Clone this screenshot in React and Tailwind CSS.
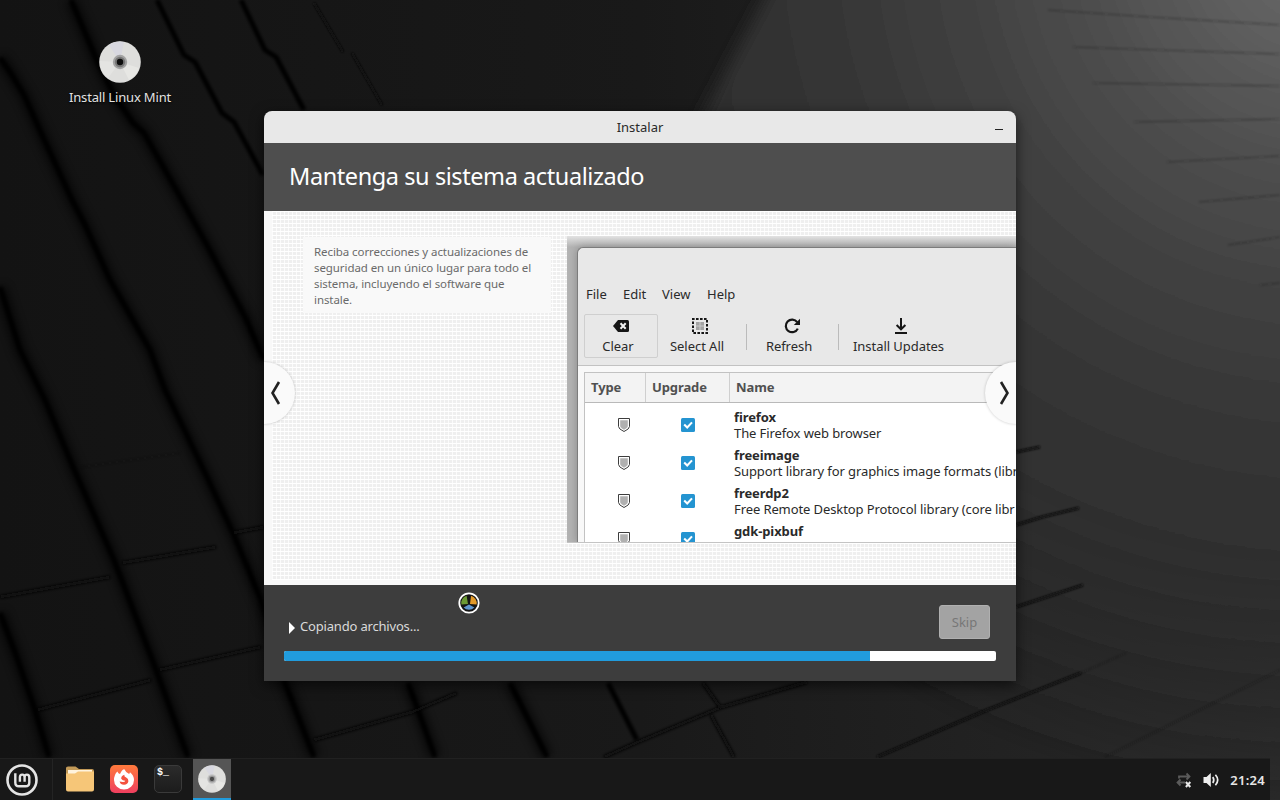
/* ── Data ─────────────────────────────────────────────────── */
const updates = [
  { name: "firefox", text: "The Firefox web browser" },
  { name: "freeimage", text: "Support library for graphics image formats (libr" },
  { name: "freerdp2", text: "Free Remote Desktop Protocol library (core libr" },
  { name: "gdk-pixbuf" },
];

const progress = 82.3;

/* ── Wallpaper ────────────────────────────────────────────── */
const grooves = [
  "M0 613L16 655L35 710L49 757",
  "M0 287L20 350L45 400L73 467L114 560L155 667L188 757",
  "M0 58L10 72L24 95L42 135L72 200L85 225L110 280L150 350L165 390L182 425L206 475L233 533L261 600L285 683L314 757",
  "M71 0L98 63L114 95L133 123L144 133L178 193L208 247L245 317L264 360",
  "M408 683L418 710L435 757",
  "M510 683L547 757",
];

const thinGrooves = [
  "M157 0L184 55L195 62L222 113L234 122L263 175",
  "M241 0L265 50L276 57L304 110",
  "M608 683L637 740",
];

const seams = [
  "M0 597L110 577",
  "M122 563L216 547",
  "M233 533L264 527",
  "M37 710L151 680",
  "M159 670L261 647",
  "M314 740L412 712L457 693",
  "M604 757L640 741L722 707L807 682",
  "M703 683L720 707M711 715L734 757",
];

const thinSeams = [
  "M314 3L343 52M352 53L382 105",
  "M877 757L987 710L1081 673",
  "M1016 607L1083 585",
  "M1016 525L1042 517L1079 508",
  "M1016 452L1040 447",
];

const faintLines = [
  "M1048 10L1150 17L1280 25",
  "M1073 47L1160 50L1280 54",
  "M1093 83L1280 86",
  "M1134 122L1280 119",
  "M1167 162L1280 156",
  "M1199 202L1280 195",
  "M1228 245L1280 237",
  "M1260 285L1280 283",
  "M1081 673L1126 653",
  "M1105 757L1280 670",
  "M82 467L180 453",
];

function Wallpaper() {
  return (
    <svg className="absolute inset-0" width="1280" height="800" viewBox="0 0 1280 800">
      <defs>
        <linearGradient id="base" x1="0" y1="0" x2="1280" y2="0" gradientUnits="userSpaceOnUse">
          <stop offset="0" stopColor="#131313" />
          <stop offset="0.5" stopColor="#191919" />
          <stop offset="1" stopColor="#292929" />
        </linearGradient>
        <radialGradient id="glow" cx="1320" cy="-60" r="860" gradientUnits="userSpaceOnUse">
          <stop offset="0" stopColor="#6c6c6c" />
          <stop offset="0.12" stopColor="#5f5f5f" />
          <stop offset="0.25" stopColor="#505050" />
          <stop offset="0.4" stopColor="#424242" />
          <stop offset="0.55" stopColor="#373737" />
          <stop offset="0.72" stopColor="#2f2f2f" />
          <stop offset="0.85" stopColor="#2b2b2b" stopOpacity="0.6" />
          <stop offset="1" stopColor="#272727" stopOpacity="0" />
        </radialGradient>
        <filter id="soft" x="-20%" y="-20%" width="140%" height="140%">
          <feGaussianBlur stdDeviation="8" />
        </filter>
        <filter id="shade" x="-50" y="-50" width="1380" height="900" filterUnits="userSpaceOnUse">
          <feGaussianBlur stdDeviation="4" />
        </filter>
        <filter id="edge" x="-50" y="-50" width="1380" height="900" filterUnits="userSpaceOnUse">
          <feGaussianBlur stdDeviation="1.6" />
        </filter>
        <filter id="fine" x="-50" y="-50" width="1380" height="900" filterUnits="userSpaceOnUse">
          <feGaussianBlur stdDeviation="0.8" />
        </filter>
      </defs>
      <rect width="1280" height="800" fill="url(#base)" />
      <path d="M785 -40L625 260V800H1320V-40Z" fill="url(#glow)" filter="url(#soft)" />
      <g fill="none" strokeLinejoin="round">
        <g stroke="#060606" strokeWidth="12" opacity="0.65" filter="url(#shade)">
          {grooves.map((d) => <path key={d} d={d} />)}
        </g>
        <g stroke="#050505" strokeWidth="5" filter="url(#edge)">
          {grooves.map((d) => <path key={d} d={d} />)}
        </g>
        <g stroke="#050505" strokeWidth="5" filter="url(#edge)">
          {thinGrooves.map((d) => <path key={d} d={d} />)}
        </g>
        <g stroke="#070707" strokeWidth="3.5" filter="url(#edge)">
          {seams.map((d) => <path key={d} d={d} />)}
        </g>
        <g stroke="#0b0b0b" strokeWidth="2.5" filter="url(#fine)">
          {thinSeams.map((d) => <path key={d} d={d} />)}
        </g>
        <g stroke="#111" strokeWidth="1.2" opacity="0.35" filter="url(#fine)">
          {faintLines.map((d) => <path key={d} d={d} />)}
        </g>
      </g>
    </svg>
  );
}

/* ── Icons ────────────────────────────────────────────────── */
function DiscIcon({ size, hub, ring, hole }) {
  return (
    <svg width={size} height={size} viewBox="0 0 42 42">
      <circle cx="21" cy="21" r="20.8" fill="#dededc" />
      <path d="M21 21L10 4A20 20 0 0 1 25 1Z" fill="#d8d8e0" />
      <path d="M21 21L40 27A20 20 0 0 1 30 39Z" fill="#e7e7e4" />
      <path d="M21 21L1 20A20 20 0 0 0 9 37Z" fill="#e4e4e2" />
      <circle cx="21" cy="21" r="7.2" fill={hub} />
      <circle cx="21" cy="21" r="5.2" fill={ring} />
      <circle cx="21" cy="21" r="3.2" fill={hole} />
    </svg>
  );
}

function MintIcon() {
  return (
    <svg width="32" height="32" viewBox="0 0 32 32" fill="none" stroke="#e4e4e4">
      <circle cx="16" cy="16" r="14.5" strokeWidth="2.6" />
      <path
        d="M9.3 9.3V18.5Q9.3 22.3 13 22.3H19.5Q23.3 22.3 23.3 18.5V13.4Q23.3 10.6 20.9 10.6Q18.6 10.6 18.6 13.2V17.8M18.6 13.2Q18.6 10.6 16.2 10.6Q13.9 10.6 13.9 13.2V17.8"
        strokeWidth="2.4"
      />
    </svg>
  );
}

function FolderIcon() {
  return (
    <svg width="28" height="26" viewBox="0 0 28 26">
      <path d="M0 2Q0 0.5 2 0.5H9.5L13 3H26Q28 3 28 5V12H0Z" fill="#c39a58" />
      <rect x="2" y="4" width="24" height="8" fill="#fff3dc" />
      <path d="M0 7.5H9L12 5.5H28V23.5Q28 25.5 26 25.5H2Q0 25.5 0 23.5Z" fill="#f6c678" />
    </svg>
  );
}

function FirefoxIcon() {
  return (
    <svg width="28" height="28" viewBox="0 0 28 28">
      <defs>
        <linearGradient id="fox" x1="0" y1="0" x2="0" y2="1">
          <stop offset="0" stopColor="#ff7a3c" />
          <stop offset="1" stopColor="#ef3f5f" />
        </linearGradient>
      </defs>
      <rect width="28" height="28" rx="5" fill="url(#fox)" />
      <path d="M7.3 6.5Q8.3 8.5 10 9Q12 4.5 14.4 4.3Q15.5 7.3 19.2 9L20 7.2Q24 10.5 24 15A10 9.5 0 0 1 4 15Q4 10 7.3 6.5Z" fill="#fff" />
      <path d="M14.3 9.8Q14 11.8 16.2 12.4Q18.6 13.3 18.4 16.2A4.5 4.3 0 0 1 9.6 16.5L13 17Q15 17 15.3 15.8Q12.5 15.9 11.2 13.7Q11 11 14.3 9.8Z" fill="#f4523f" />
    </svg>
  );
}

function NetworkIcon() {
  return (
    <svg width="18" height="16" viewBox="0 0 18 16" fill="none">
      <path d="M3 6.5V4.5H13M10.5 1.5L13.5 4.5L10.5 7.5" stroke="#5b5b5b" strokeWidth="1.8" />
      <path d="M9 10.5H1.5M4.5 7.5L1.5 10.5L4.5 13.5" stroke="#5b5b5b" strokeWidth="1.8" />
      <path d="M9.9 10L14.3 15M14.3 10L9.9 15" stroke="#e8e8e8" strokeWidth="2" />
    </svg>
  );
}

function VolumeIcon() {
  return (
    <svg width="17" height="16" viewBox="0 0 17 16" fill="none" stroke="#eee" strokeWidth="1.7">
      <path d="M0.5 5H3.5L7.8 1V15L3.5 11H0.5Z" fill="#eee" stroke="none" />
      <path d="M9.8 5Q11.8 8 9.8 11" />
      <path d="M12.4 2.8Q17 8 12.4 13.2" />
    </svg>
  );
}

function ClearIcon() {
  return (
    <svg width="16" height="12" viewBox="0 0 16 12">
      <path d="M5 0H14.5Q16 0 16 1.5V10.5Q16 12 14.5 12H5L0 6Z" fill="#161616" />
      <path d="M7.5 3.3L12.7 8.7M12.7 3.3L7.5 8.7" stroke="#f2f2f2" strokeWidth="2" />
    </svg>
  );
}

function SelectIcon() {
  return (
    <svg width="16" height="16" viewBox="0 0 16 16" fill="none">
      <rect x="1" y="1" width="14" height="14" stroke="#161616" strokeWidth="2" strokeDasharray="2.6 1.4" strokeDashoffset="1" />
      <rect x="4" y="4" width="8" height="8" fill="#a3a3a3" />
      <path d="M4 8H12M8 4V12" stroke="#c9c9c9" strokeWidth="1" />
    </svg>
  );
}

function RefreshIcon() {
  return (
    <svg width="17" height="16" viewBox="0 0 17 16" fill="none">
      <path d="M13.8 10.6A6.3 6.3 0 1 1 13.2 4.2" stroke="#161616" strokeWidth="2.2" />
      <path d="M16 0.8V7H9.8Z" fill="#161616" />
    </svg>
  );
}

function InstallIcon() {
  return (
    <svg width="14" height="16" viewBox="0 0 14 16" fill="none" stroke="#161616" strokeWidth="2">
      <path d="M7 0V11M2.6 7L7 11.3L11.4 7M1 15H13" />
    </svg>
  );
}

function ShieldIcon() {
  return (
    <svg width="12" height="14" viewBox="0 0 12 14">
      <path d="M0.5 0.5H11.5V8.5Q11.5 11 6 13.5Q0.5 11 0.5 8.5Z" fill="#fff" stroke="#3d3d3d" />
      <path d="M2.2 2.2H9.8V8Q9.8 9.8 6 11.7Q2.2 9.8 2.2 8Z" fill="#b0b0b0" />
    </svg>
  );
}

function CheckIcon() {
  return (
    <svg width="14" height="14" viewBox="0 0 14 14">
      <rect width="14" height="14" rx="1.5" fill="#2494d1" />
      <path d="M3.2 6.6L6.2 9.5L11 4.4" fill="none" stroke="#fff" strokeWidth="2.1" />
    </svg>
  );
}

function BusyCursor() {
  return (
    <svg className="absolute left-[194px] top-[7px]" width="22" height="22" viewBox="0 0 22 22">
      <circle cx="11" cy="11" r="9.7" fill="#151515" stroke="#fff" strokeWidth="1.8" />
      <path d="M10 12L3.4 12.4A7.7 7.7 0 0 1 8.6 3.7Z" fill="#6c9a35" />
      <path d="M12 12L13 3.7A7.7 7.7 0 0 1 18.6 12.4Z" fill="#e29a2a" />
      <path d="M11 12.5L16.4 15.6A7.7 7.7 0 0 1 5.6 15.6Z" fill="#5f96cf" />
    </svg>
  );
}

/* ── Update manager preview inside the slide ──────────────── */
function ToolItem({ icon, label, className }) {
  return (
    <div className={`flex flex-col h-11 shrink-0 ${className}`}>
      <div className="flex h-6 items-center justify-center">{icon}</div>
      <span className="text-center whitespace-nowrap leading-4">{label}</span>
    </div>
  );
}

function UpdateManager() {
  return (
    <div className="w-[449px] h-[307px] mt-[25px] ml-4 pl-[10px] pt-[11px] shrink-0 overflow-hidden bg-[linear-gradient(to_bottom,#e2e2e2,#b4b4b4_11px,#b4b4b4)] border-b border-[#c4c4c4]">
      <div className="w-[439px] h-[296px] flex flex-col overflow-hidden rounded-tl-md border-t border-l border-[#7c7c7c] bg-[#e8e8e8] text-[13px] text-[#2a2a2a] shadow-[0_0_10px_rgba(0,0,0,0.25)]">
        <div className="flex pt-[38px] pl-2 leading-4">
          <span className="w-[37px]">File</span>
          <span className="w-[39px]">Edit</span>
          <span className="w-[45px]">View</span>
          <span>Help</span>
        </div>
        <div className="flex pt-[12px] pl-[6px] tracking-[-0.05px]">
          <ToolItem
            icon={<div className="pl-[6px]"><ClearIcon /></div>}
            label="Clear"
            className="w-[74px] outline outline-[#cfcfcf] -outline-offset-1 pr-[6px] rounded-xs"
          />
          <ToolItem icon={<div className="pl-[6px]"><SelectIcon /></div>} label="Select All" className="w-[78px]" />
          <div className="w-px h-[26px] mt-[10px] ml-[10px] bg-[#bbb]" />
          <ToolItem icon={<div className="pl-[6px]"><RefreshIcon /></div>} label="Refresh" className="w-[84px]" />
          <div className="w-px h-[26px] mt-[10px] ml-[7px] bg-[#bbb]" />
          <ToolItem icon={<div className="pl-1"><InstallIcon /></div>} label="Install Updates" className="w-[119px]" />
        </div>
        <div className="flex-1 mt-[7px] pt-[6px] pl-[6px] bg-[#f8f8f8] border-t border-[#c2c2c2]">
          <div className="h-full bg-white border-t border-l border-[#c2c2c2]">
            <div className="flex h-[30px] items-center bg-[#f3f3f3] border-b border-[#b9b9b9] font-bold tracking-[-0.1px] text-[#505050]">
              <span className="w-[61px] h-full pl-[6px] leading-[29px] border-r border-[#cfcfcf]">Type</span>
              <span className="w-[84px] h-full pl-[6px] leading-[29px] border-r border-[#cfcfcf]">Upgrade</span>
              <span className="pl-[6px]">Name</span>
            </div>
            <div className="pt-[3px]">
              {updates.map((u) => (
                <div key={u.name} className="flex h-[38px] items-start pt-[3px]">
                  <div className="w-[78px] shrink-0 pl-[33px] pt-[9px]"><ShieldIcon /></div>
                  <div className="w-[71px] shrink-0 pl-[18px] pt-[9px]"><CheckIcon /></div>
                  <div className="leading-4 whitespace-nowrap tracking-[-0.1px]">
                    <div className="font-bold">{u.name}</div>
                    {u.text && <div>{u.text}</div>}
                  </div>
                </div>
              ))}
            </div>
          </div>
        </div>
      </div>
    </div>
  );
}

/* ── Installer window ─────────────────────────────────────── */
function Installer() {
  return (
    <div className="absolute left-[264px] top-[111px] w-[752px] h-[570px] flex flex-col rounded-t-lg overflow-hidden shadow-[0_4px_14px_rgba(0,0,0,0.6)]">
      <div className="relative h-8 shrink-0 flex items-center justify-center pt-[2px] bg-[#e8e8e8] text-[13px] text-[#2a2a2a]">
        Instalar
        <div className="absolute right-[13px] top-[18px] w-2 h-px bg-[#222]" />
      </div>
      <div className="h-[68px] shrink-0 flex items-center pl-[25px] bg-[#4e4e4e] text-[23.5px] tracking-[-0.42px] text-white">
        Mantenga su sistema actualizado
      </div>

      <div className="relative h-[374px] shrink-0 bg-[#f8f8f8]">
        <div className="h-[369px] ml-2 pl-[31px] flex items-start overflow-hidden bg-[#efefef] bg-[linear-gradient(#fff_1px,transparent_1px),linear-gradient(90deg,#fbfbfb_1px,transparent_1px)] bg-[size:4px_4px]">
          <p className="w-[248px] h-[76px] mt-[26px] pt-[7px] pl-[11px] shrink-0 bg-[#f9f9f9] text-[11.5px] leading-4 tracking-[-0.08px] text-[#6a6a6a] whitespace-nowrap">
            Reciba correcciones y actualizaciones de<br />
            seguridad en un único lugar para todo el<br />
            sistema, incluyendo el software que<br />
            instale.
          </p>
          <UpdateManager />
        </div>
        <button className="absolute left-[-31px] top-[151px] size-[62px] rounded-full bg-[#fafafa] shadow-[0_0_3px_rgba(0,0,0,0.22)] flex items-center justify-end pr-[14px]">
          <svg width="10" height="24" viewBox="0 0 10 24" fill="none" stroke="#222" strokeWidth="2.6">
            <path d="M8 1L1.5 12L8 23" />
          </svg>
        </button>
        <button className="absolute right-[-31px] top-[151px] size-[62px] rounded-full bg-[#fafafa] shadow-[0_0_3px_rgba(0,0,0,0.22)] flex items-center pl-[14px]">
          <svg width="10" height="24" viewBox="0 0 10 24" fill="none" stroke="#222" strokeWidth="2.6">
            <path d="M2 1L8.5 12L2 23" />
          </svg>
        </button>
      </div>

      <div className="relative flex-1 bg-[#3d3d3d] px-5 pt-5">
        <BusyCursor />
        <div className="flex h-[34px] justify-between pr-[6px]">
          <div className="flex items-end pl-[5px] text-[13px] leading-[26px] tracking-[-0.18px] text-[#dadada]">
            <svg className="mr-[5px] mb-[5px]" width="6" height="12" viewBox="0 0 6 12">
              <path d="M0 0L6 6L0 12Z" fill="#fff" />
            </svg>
            Copiando archivos...
          </div>
          <button className="w-[51px] pt-[2px] rounded-[3px] bg-[#a3a3a3] border border-[#b0b0b0] text-[13px] text-[#777]">
            Skip
          </button>
        </div>
        <div className="h-[10px] mt-3 rounded-[2px] bg-white overflow-hidden">
          <div className="h-full bg-[#219cdd]" style={{ width: `${progress}%` }} />
        </div>
      </div>
    </div>
  );
}

/* ── Bottom panel ─────────────────────────────────────────── */
function Taskbar() {
  return (
    <div className="relative flex h-[42px] mr-[10px] bg-[#181818] border-t border-[#212121] items-center">
      <div className="pl-[6px] pr-[14px]"><MintIcon /></div>
      <div className="w-px h-full bg-[#242424]" />
      <div className="pl-[13px] pb-[2px]"><FolderIcon /></div>
      <div className="pl-4 pb-[2px]"><FirefoxIcon /></div>
      <div className="ml-4 mb-[2px] size-7 rounded-[5px] border border-[#3a3a3a] bg-linear-to-b from-[#2b2b2b] to-[#1c1c1c] pl-[2px] pt-px text-[10px] leading-[11px] font-bold text-white font-['Liberation_Mono',monospace]">
        $_
      </div>
      <div className="ml-[11px] w-[38px] h-full flex items-center justify-center bg-[#555] border-b-2 border-[#219cdd]">
        <DiscIcon size={28} hub="#c4c4c4" ring="#9c9c9c" hole="#4a4a4a" />
      </div>
      <div className="flex-1" />
      <NetworkIcon />
      <div className="pl-[9px] pr-[10px]"><VolumeIcon /></div>
      <span className="pr-[5px] pt-[2px] text-[13px] font-semibold tracking-[0.3px] text-[#e6e6e6]">21:24</span>
    </div>
  );
}

export default function App() {
  return (
    <div className="relative w-[1280px] h-[800px] overflow-hidden flex flex-col bg-[#141414] font-['Noto_Sans',sans-serif]">
      <Wallpaper />
      <div className="relative flex-1">
        <div className="w-[120px] ml-[60px] pt-[41px] flex flex-col items-center">
          <DiscIcon size={42} hub="#a2a2a2" ring="#777" hole="#0e0e0e" />
          <span className="mt-[5px] text-[13px] tracking-[-0.17px] text-[#e2e2e2] whitespace-nowrap [text-shadow:0_1px_2px_#000]">
            Install Linux Mint
          </span>
        </div>
        <Installer />
      </div>
      <Taskbar />
    </div>
  );
}
